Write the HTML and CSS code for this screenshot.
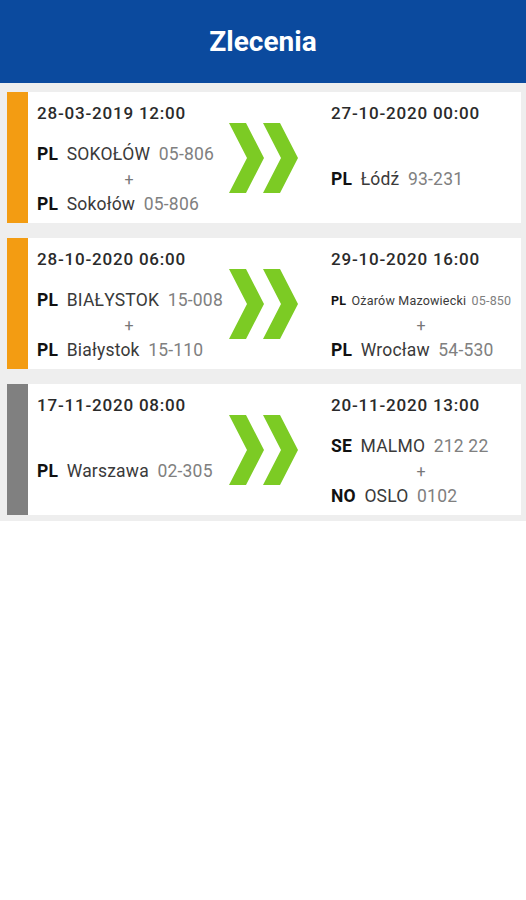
FILE: index.html
```html
<!DOCTYPE html>
<html>
<head>
  <meta charset="UTF-8">
  <link rel="stylesheet" href="styles.css">
</head>
<body>

  <header class="app-bar">
    <h1>Zlecenia</h1>
  </header>

  <div class="order-list">

    <div class="order">
      <div class="order__stripe order__stripe--pending"></div>
      <div class="order__body">
        <div class="stop">
          <div class="stop__date">28-03-2019 12:00</div>
          <div class="stop__places">
            <div class="place"><b>PL</b> <span class="place__city">SOKOŁÓW</span> <span class="place__zip">05-806</span></div>
            <div class="plus">+</div>
            <div class="place"><b>PL</b> <span class="place__city">Sokołów</span> <span class="place__zip">05-806</span></div>
          </div>
        </div>
        <div class="arrows">
          <svg width="70" height="70" viewBox="0 0 70 70">
            <polygon points="0,0 17,0 35,35 17,70 0,70 18,35" />
            <polygon points="34,0 51,0 69,35 51,70 34,70 52,35" />
          </svg>
        </div>
        <div class="stop">
          <div class="stop__date">27-10-2020 00:00</div>
          <div class="stop__places">
            <div class="place"><b>PL</b> <span class="place__city">Łódź</span> <span class="place__zip">93-231</span></div>
          </div>
        </div>
      </div>
    </div>

    <div class="order">
      <div class="order__stripe order__stripe--pending"></div>
      <div class="order__body">
        <div class="stop">
          <div class="stop__date">28-10-2020 06:00</div>
          <div class="stop__places">
            <div class="place"><b>PL</b> <span class="place__city">BIAŁYSTOK</span> <span class="place__zip">15-008</span></div>
            <div class="plus">+</div>
            <div class="place"><b>PL</b> <span class="place__city">Białystok</span> <span class="place__zip">15-110</span></div>
          </div>
        </div>
        <div class="arrows">
          <svg width="70" height="70" viewBox="0 0 70 70">
            <polygon points="0,0 17,0 35,35 17,70 0,70 18,35" />
            <polygon points="34,0 51,0 69,35 51,70 34,70 52,35" />
          </svg>
        </div>
        <div class="stop">
          <div class="stop__date">29-10-2020 16:00</div>
          <div class="stop__places">
            <div class="place place--small"><b>PL</b> <span class="place__city">Ożarów Mazowiecki</span> <span class="place__zip">05-850</span></div>
            <div class="plus">+</div>
            <div class="place"><b>PL</b> <span class="place__city">Wrocław</span> <span class="place__zip">54-530</span></div>
          </div>
        </div>
      </div>
    </div>

    <div class="order">
      <div class="order__stripe order__stripe--done"></div>
      <div class="order__body">
        <div class="stop">
          <div class="stop__date">17-11-2020 08:00</div>
          <div class="stop__places">
            <div class="place"><b>PL</b> <span class="place__city">Warszawa</span> <span class="place__zip">02-305</span></div>
          </div>
        </div>
        <div class="arrows">
          <svg width="70" height="70" viewBox="0 0 70 70">
            <polygon points="0,0 17,0 35,35 17,70 0,70 18,35" />
            <polygon points="34,0 51,0 69,35 51,70 34,70 52,35" />
          </svg>
        </div>
        <div class="stop">
          <div class="stop__date">20-11-2020 13:00</div>
          <div class="stop__places">
            <div class="place"><b>SE</b> <span class="place__city">MALMO</span> <span class="place__zip">212 22</span></div>
            <div class="plus">+</div>
            <div class="place"><b>NO</b> <span class="place__city">OSLO</span> <span class="place__zip">0102</span></div>
          </div>
        </div>
      </div>
    </div>

  </div>
</body>
</html>
```

FILE: styles.css
```css
html,
body {
  margin: 0;
  background: #fff;
  font-family: Roboto, "Noto Sans", sans-serif;
}

.app-bar {
  align-items: center;
  background: #0b4a9e;
  box-shadow: 0 1px 0 #083a7c;
  display: flex;
  height: 83px;
  justify-content: center;
}

.app-bar h1 {
  color: #fff;
  font-size: 28px;
  font-weight: 700;
  margin: 0;
}

.order-list {
  background: #eeeeee;
  display: flex;
  flex-direction: column;
  gap: 15px;
  padding: 9px 5px 6px 7px;
}

.order {
  background: #fff;
  display: flex;
  height: 131px;
}

.order__stripe {
  width: 21px;
  flex: none;
}

.order__stripe--pending {
  background: #f39c12;
}

.order__stripe--done {
  background: #808080;
}

.order__body {
  display: grid;
  flex: 1;
  grid-template-columns: 184px 110px 1fr;
  padding: 9px 10px 0 9px;
}

.stop {
  display: flex;
  flex-direction: column;
}

.stop__date {
  color: #2a2a2a;
  font-size: 17px;
  font-weight: 500;
  letter-spacing: 0.8px;
  line-height: 24px;
}

.stop__places {
  display: flex;
  flex: 1;
  flex-direction: column;
  justify-content: center;
  margin-top: 10px;
}

.place {
  color: #3a3a3a;
  font-size: 17.5px;
  letter-spacing: 0.2px;
  line-height: 25px;
  white-space: nowrap;
}

.place b {
  color: #111;
  font-weight: 700;
  margin-right: 4px;
}

.place__city {
  margin-right: 4px;
}

.place__zip {
  color: #808080;
}

.place--small {
  font-size: 12.5px;
  letter-spacing: 0.2px;
}

.place--small b {
  margin-right: 2px;
}

.place--small .place__city {
  margin-right: 2px;
}

.plus {
  color: #777;
  font-size: 16px;
  line-height: 25px;
  text-align: center;
}

.arrows {
  align-self: center;
  display: flex;
  margin-left: 8px;
  margin-top: -9px;
}

.arrows svg {
  fill: #7ccb24;
}
```
